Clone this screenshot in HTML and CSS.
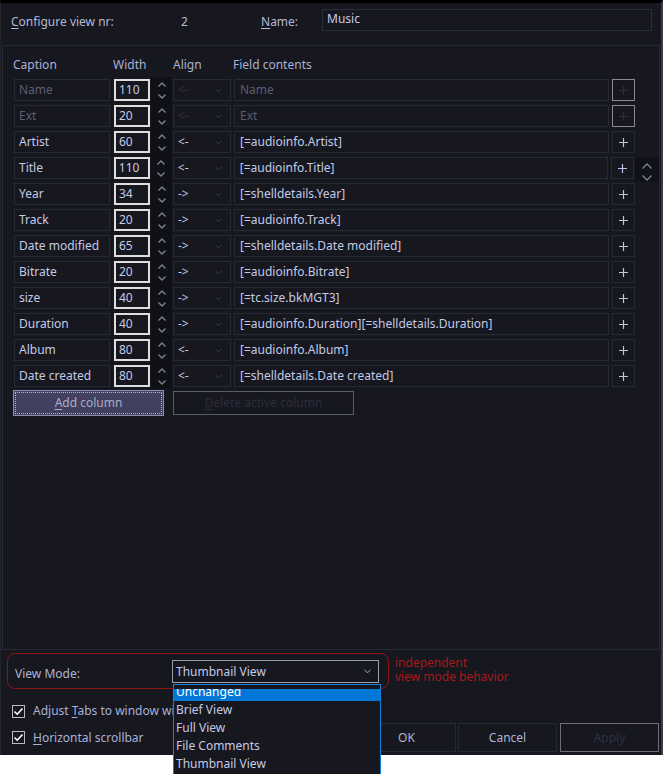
FILE: index.html
```html
<!DOCTYPE html>
<html>
<head>
<meta charset="utf-8">
<link rel="stylesheet" href="styles.css">
</head>
<body>
<div class="window">
  <div class="header">
    <span class="lbl-cfg"><u>C</u>onfigure view nr:</span>
    <span class="nr">2</span>
    <span class="lbl-name"><u>N</u>ame:</span>
    <div class="name-input">Music</div>
  </div>

  <div class="panel">
    <div class="heads">
      <span class="h-cap">Caption</span><span class="h-w">Width</span><span class="h-al">Align</span><span class="h-f">Field contents</span>
    </div>
    <div class="rows">
      <div class="row disabled">
        <div class="cap box">Name</div><div class="wid">110</div>
        <div class="spin"><svg viewBox="0 0 8 5"><path d="M0.5 4.5 L4 1 L7.5 4.5"/></svg><svg viewBox="0 0 8 5"><path d="M0.5 0.5 L4 4 L7.5 0.5"/></svg></div>
        <div class="align box"><span>&lt;-</span><svg class="chev" viewBox="0 0 8 5"><path d="M0.5 0.5 L4 4 L7.5 0.5"/></svg></div>
        <div class="field box">Name</div>
        <div class="plus"><svg viewBox="0 0 9 9"><path d="M4.5 0 V9 M0 4.5 H9"/></svg></div>
      </div>
      <div class="row disabled">
        <div class="cap box">Ext</div><div class="wid">20</div>
        <div class="spin"><svg viewBox="0 0 8 5"><path d="M0.5 4.5 L4 1 L7.5 4.5"/></svg><svg viewBox="0 0 8 5"><path d="M0.5 0.5 L4 4 L7.5 0.5"/></svg></div>
        <div class="align box"><span>&lt;-</span><svg class="chev" viewBox="0 0 8 5"><path d="M0.5 0.5 L4 4 L7.5 0.5"/></svg></div>
        <div class="field box">Ext</div>
        <div class="plus"><svg viewBox="0 0 9 9"><path d="M4.5 0 V9 M0 4.5 H9"/></svg></div>
      </div>
      <div class="row">
        <div class="cap box">Artist</div><div class="wid">60</div>
        <div class="spin"><svg viewBox="0 0 8 5"><path d="M0.5 4.5 L4 1 L7.5 4.5"/></svg><svg viewBox="0 0 8 5"><path d="M0.5 0.5 L4 4 L7.5 0.5"/></svg></div>
        <div class="align box"><span>&lt;-</span><svg class="chev" viewBox="0 0 8 5"><path d="M0.5 0.5 L4 4 L7.5 0.5"/></svg></div>
        <div class="field box">[=audioinfo.Artist]</div>
        <div class="plus"><svg viewBox="0 0 9 9"><path d="M4.5 0 V9 M0 4.5 H9"/></svg></div>
      </div>
      <div class="row">
        <div class="cap box">Title</div><div class="wid">110</div>
        <div class="spin"><svg viewBox="0 0 8 5"><path d="M0.5 4.5 L4 1 L7.5 4.5"/></svg><svg viewBox="0 0 8 5"><path d="M0.5 0.5 L4 4 L7.5 0.5"/></svg></div>
        <div class="align box"><span>&lt;-</span><svg class="chev" viewBox="0 0 8 5"><path d="M0.5 0.5 L4 4 L7.5 0.5"/></svg></div>
        <div class="field box">[=audioinfo.Title]</div>
        <div class="plus"><svg viewBox="0 0 9 9"><path d="M4.5 0 V9 M0 4.5 H9"/></svg></div>
        <div class="scroll"><svg viewBox="0 0 10 6"><path d="M0.5 5.5 L5 1 L9.5 5.5"/></svg><svg viewBox="0 0 10 6"><path d="M0.5 0.5 L5 5 L9.5 0.5"/></svg></div>
      </div>
      <div class="row">
        <div class="cap box">Year</div><div class="wid">34</div>
        <div class="spin"><svg viewBox="0 0 8 5"><path d="M0.5 4.5 L4 1 L7.5 4.5"/></svg><svg viewBox="0 0 8 5"><path d="M0.5 0.5 L4 4 L7.5 0.5"/></svg></div>
        <div class="align box"><span>-&gt;</span><svg class="chev" viewBox="0 0 8 5"><path d="M0.5 0.5 L4 4 L7.5 0.5"/></svg></div>
        <div class="field box">[=shelldetails.Year]</div>
        <div class="plus"><svg viewBox="0 0 9 9"><path d="M4.5 0 V9 M0 4.5 H9"/></svg></div>
      </div>
      <div class="row">
        <div class="cap box">Track</div><div class="wid">20</div>
        <div class="spin"><svg viewBox="0 0 8 5"><path d="M0.5 4.5 L4 1 L7.5 4.5"/></svg><svg viewBox="0 0 8 5"><path d="M0.5 0.5 L4 4 L7.5 0.5"/></svg></div>
        <div class="align box"><span>-&gt;</span><svg class="chev" viewBox="0 0 8 5"><path d="M0.5 0.5 L4 4 L7.5 0.5"/></svg></div>
        <div class="field box">[=audioinfo.Track]</div>
        <div class="plus"><svg viewBox="0 0 9 9"><path d="M4.5 0 V9 M0 4.5 H9"/></svg></div>
      </div>
      <div class="row">
        <div class="cap box">Date modified</div><div class="wid">65</div>
        <div class="spin"><svg viewBox="0 0 8 5"><path d="M0.5 4.5 L4 1 L7.5 4.5"/></svg><svg viewBox="0 0 8 5"><path d="M0.5 0.5 L4 4 L7.5 0.5"/></svg></div>
        <div class="align box"><span>-&gt;</span><svg class="chev" viewBox="0 0 8 5"><path d="M0.5 0.5 L4 4 L7.5 0.5"/></svg></div>
        <div class="field box">[=shelldetails.Date modified]</div>
        <div class="plus"><svg viewBox="0 0 9 9"><path d="M4.5 0 V9 M0 4.5 H9"/></svg></div>
      </div>
      <div class="row">
        <div class="cap box">Bitrate</div><div class="wid">20</div>
        <div class="spin"><svg viewBox="0 0 8 5"><path d="M0.5 4.5 L4 1 L7.5 4.5"/></svg><svg viewBox="0 0 8 5"><path d="M0.5 0.5 L4 4 L7.5 0.5"/></svg></div>
        <div class="align box"><span>-&gt;</span><svg class="chev" viewBox="0 0 8 5"><path d="M0.5 0.5 L4 4 L7.5 0.5"/></svg></div>
        <div class="field box">[=audioinfo.Bitrate]</div>
        <div class="plus"><svg viewBox="0 0 9 9"><path d="M4.5 0 V9 M0 4.5 H9"/></svg></div>
      </div>
      <div class="row">
        <div class="cap box">size</div><div class="wid">40</div>
        <div class="spin"><svg viewBox="0 0 8 5"><path d="M0.5 4.5 L4 1 L7.5 4.5"/></svg><svg viewBox="0 0 8 5"><path d="M0.5 0.5 L4 4 L7.5 0.5"/></svg></div>
        <div class="align box"><span>-&gt;</span><svg class="chev" viewBox="0 0 8 5"><path d="M0.5 0.5 L4 4 L7.5 0.5"/></svg></div>
        <div class="field box">[=tc.size.bkMGT3]</div>
        <div class="plus"><svg viewBox="0 0 9 9"><path d="M4.5 0 V9 M0 4.5 H9"/></svg></div>
      </div>
      <div class="row">
        <div class="cap box">Duration</div><div class="wid">40</div>
        <div class="spin"><svg viewBox="0 0 8 5"><path d="M0.5 4.5 L4 1 L7.5 4.5"/></svg><svg viewBox="0 0 8 5"><path d="M0.5 0.5 L4 4 L7.5 0.5"/></svg></div>
        <div class="align box"><span>-&gt;</span><svg class="chev" viewBox="0 0 8 5"><path d="M0.5 0.5 L4 4 L7.5 0.5"/></svg></div>
        <div class="field box">[=audioinfo.Duration][=shelldetails.Duration]</div>
        <div class="plus"><svg viewBox="0 0 9 9"><path d="M4.5 0 V9 M0 4.5 H9"/></svg></div>
      </div>
      <div class="row">
        <div class="cap box">Album</div><div class="wid">80</div>
        <div class="spin"><svg viewBox="0 0 8 5"><path d="M0.5 4.5 L4 1 L7.5 4.5"/></svg><svg viewBox="0 0 8 5"><path d="M0.5 0.5 L4 4 L7.5 0.5"/></svg></div>
        <div class="align box"><span>&lt;-</span><svg class="chev" viewBox="0 0 8 5"><path d="M0.5 0.5 L4 4 L7.5 0.5"/></svg></div>
        <div class="field box">[=audioinfo.Album]</div>
        <div class="plus"><svg viewBox="0 0 9 9"><path d="M4.5 0 V9 M0 4.5 H9"/></svg></div>
      </div>
      <div class="row">
        <div class="cap box">Date created</div><div class="wid">80</div>
        <div class="spin"><svg viewBox="0 0 8 5"><path d="M0.5 4.5 L4 1 L7.5 4.5"/></svg><svg viewBox="0 0 8 5"><path d="M0.5 0.5 L4 4 L7.5 0.5"/></svg></div>
        <div class="align box"><span>&lt;-</span><svg class="chev" viewBox="0 0 8 5"><path d="M0.5 0.5 L4 4 L7.5 0.5"/></svg></div>
        <div class="field box">[=shelldetails.Date created]</div>
        <div class="plus"><svg viewBox="0 0 9 9"><path d="M4.5 0 V9 M0 4.5 H9"/></svg></div>
      </div>
    </div>
    <div class="col-buttons">
      <div class="btn-add"><span class="focus"><u>A</u>dd column</span></div>
      <div class="btn-del"><u>D</u>elete active column</div>
    </div>
  </div>

  <div class="viewmode-row">
    <div class="viewmode">
      <span class="vm-label">View Mode:</span>
      <div class="select"><span>Thumbnail View</span><svg class="sel-chev" viewBox="0 0 8 5"><path d="M0.5 0.5 L4 4 L7.5 0.5"/></svg></div>
    </div>
    <div class="note"><div>independent</div><div>view mode behavior</div></div>
  </div>

  <div class="bottom">
    <div class="checks">
      <div class="check"><svg viewBox="0 0 13 13"><rect x="0.5" y="0.5" width="12" height="12"/><path d="M2.5 6.5 L5.2 9.2 L10.5 3.5"/></svg><span class="clip">Adjust <u>T</u>abs to window width</span></div>
      <div class="check"><svg viewBox="0 0 13 13"><rect x="0.5" y="0.5" width="12" height="12"/><path d="M2.5 6.5 L5.2 9.2 L10.5 3.5"/></svg><span><u>H</u>orizontal scrollbar</span></div>
    </div>
    <div class="buttons">
      <div class="btn">OK</div>
      <div class="btn">Cancel</div>
      <div class="btn apply">Apply</div>
    </div>
  </div>
</div>

<div class="dropdown">
  <div class="item sel"><span>Unchanged</span></div>
  <div class="item">Brief View</div>
  <div class="item">Full View</div>
  <div class="item">File Comments</div>
  <div class="item">Thumbnail View</div>
</div>
</body>
</html>
```

FILE: styles.css
```css
* { box-sizing: border-box; }
html, body { margin: 0; padding: 0; background: #ffffff; }
body {
  font-family: "Noto Sans", "Open Sans", sans-serif;
  font-size: 12px;
  color: #c4cae6;
  position: relative;
  width: 663px;
  height: 774px;
  overflow: hidden;
}
u { text-decoration: underline; text-underline-offset: 2px; }

.window {
  width: 663px;
  height: 755px;
  background: #16171f;
  border-top: 3px solid #000;
  border-left: 1px solid #23242c;
  border-right: 2px solid #3a3b44;
  display: flex;
  flex-direction: column;
}

/* header */
.header {
  height: 42px;
  display: flex;
  align-items: flex-start;
  padding-top: 6px;
  padding-left: 10px;
  line-height: 22px;
  color: #b3bad8;
}
.lbl-cfg, .nr, .lbl-name { margin-top: 2px; }
.lbl-cfg { width: 170px; }
.nr { width: 80px; }
.lbl-name { width: 61px; }
.name-input {
  width: 330px;
  height: 22px;
  border: 1px solid #2a2c37;
  padding-left: 4px;
  line-height: 18px;
  color: #c4cae6;
}

/* panel */
.panel {
  margin-left: 1px;
  width: 658px;
  height: 605px;
  border: 1px solid #262833;
  padding-top: 11px;
}
.heads {
  display: flex;
  height: 16px;
  line-height: 16px;
  padding-left: 10px;
  color: #a9b1d4;
}
.h-cap { width: 100px; }
.h-w { width: 60px; }
.h-al { width: 60px; }

.rows {
  margin-top: 6px;
  display: flex;
  flex-direction: column;
  gap: 4px;
}
.row {
  display: flex;
  height: 22px;
  padding-left: 11px;
  align-items: flex-start;
}
.box {
  height: 22px;
  border: 1px solid #272934;
  line-height: 20px;
  padding-left: 4px;
  white-space: nowrap;
  overflow: hidden;
}
.cap { width: 96px; margin-right: 4px; }
.wid {
  width: 36px;
  height: 22px;
  border: 2px solid #dedede;
  padding-left: 3px;
  line-height: 18px;
  margin-right: 1px;
  color: #c4cae6;
}
.spin {
  width: 21px;
  height: 26px;
  margin-top: -2px;
  background: #101117;
  margin-right: 1px;
  display: flex;
  flex-direction: column;
  align-items: center;
  padding-top: 5px;
  gap: 7px;
}
.spin svg { width: 8px; height: 5px; display: block; }
.spin path, .scroll path { fill: none; stroke: #7d8193; stroke-width: 1.4; }
.align {
  width: 58px;
  margin-right: 3px;
  display: flex;
  align-items: center;
  justify-content: space-between;
  padding-right: 8px;
}
.chev { width: 7px; height: 5px; display: block; }
.chev path { fill: none; stroke: #393c4b; stroke-width: 1.1; }
.field { width: 375px; margin-right: 3px; padding-left: 5px; }
.plus {
  width: 23px;
  height: 22px;
  border: 1px solid #272934;
  display: flex;
  align-items: center;
  justify-content: center;
}
.plus svg { width: 9px; height: 9px; display: block; }
.plus path { stroke: #bcc3ea; stroke-width: 1.2; fill: none; }

.row.disabled { color: #5b5f71; }
.row.disabled .align span { color: #2f3240; }
.row.disabled .plus { border-color: #8a8a8e; }
.row.disabled .plus path { stroke: #2c2e3a; }

.scroll {
  width: 24px;
  height: 25px;
  margin-left: 1px;
  background: #111218;
  display: flex;
  flex-direction: column;
  align-items: center;
  padding-top: 6px;
  gap: 6px;
  flex-shrink: 0;
}
.scroll svg { width: 10px; height: 6px; display: block; }

.col-buttons {
  display: flex;
  margin-top: 3px;
  padding-left: 10px;
  align-items: flex-start;
}
.btn-add {
  width: 151px;
  height: 26px;
  background: #41405f;
  border: 1px solid #8c8db3;
  padding: 1px;
  color: #a9accb;
}
.btn-add .focus {
  display: block;
  height: 100%;
  border: 1px dotted #b4b6d4;
  text-align: center;
  line-height: 20px;
}
.btn-del {
  margin-left: 9px;
  margin-top: 1px;
  width: 181px;
  height: 24px;
  border: 1px solid #5a5c66;
  color: #2c2e3c;
  text-align: center;
  line-height: 22px;
}

/* view mode */
.viewmode-row {
  display: flex;
  margin-top: 3px;
  padding-left: 6px;
}
.viewmode {
  width: 382px;
  height: 36px;
  border: 1.5px solid #8c1616;
  border-radius: 8px;
  display: flex;
  align-items: flex-start;
  padding-left: 7px;
}
.vm-label {
  width: 157px;
  line-height: 20px;
  margin-top: 10px;
  color: #aeb5d4;
}
.select {
  margin-top: 6px;
  width: 207px;
  height: 23px;
  border: 1px solid #9a9cae;
  display: flex;
  align-items: center;
  justify-content: space-between;
  padding-left: 3px;
  padding-right: 7px;
  color: #c4cae6;
}
.sel-chev { width: 7px; height: 5px; display: block; }
.sel-chev path { fill: none; stroke: #b4b8cc; stroke-width: 1.1; }
.note {
  margin-left: 6px;
  margin-top: 3px;
  color: #a8191b;
  line-height: 14px;
}

/* bottom */
.bottom {
  display: flex;
  margin-top: 15px;
  padding-left: 11px;
}
.checks {
  display: flex;
  flex-direction: column;
  gap: 12px;
}
.check {
  display: flex;
  align-items: center;
  height: 14px;
  color: #a9b1d6;
  white-space: nowrap;
}
.check .clip {
  display: block;
  max-width: 141px;
  overflow: hidden;
  line-height: 16px;
}
.check svg { width: 13px; height: 13px; display: block; margin-right: 8px; flex-shrink: 0; }
.check rect { fill: #16171f; stroke: #b9b9c0; stroke-width: 1; }
.check path { fill: none; stroke: #ffffff; stroke-width: 1.6; }

.buttons {
  margin-left: auto;
  margin-right: 2px;
  display: flex;
  gap: 2px;
  margin-top: 19px;
}
.btn {
  width: 99px;
  height: 29px;
  border: 1px solid #262833;
  text-align: center;
  line-height: 27px;
  color: #aeb5d6;
}
.btn.apply {
  margin-left: 1px;
  border-color: #6d6d72;
  color: #2f3242;
}

/* dropdown overlay */
.dropdown {
  position: absolute;
  left: 173px;
  top: 684px;
  width: 208px;
  height: 100px;
  border: 1px solid #1b7fd8;
  background: #16171f;
  padding-top: 4px;
  color: #c4cae6;
}
.item {
  height: 18px;
  line-height: 18px;
  padding-left: 2px;
}
.item.sel {
  height: 12px;
  overflow: hidden;
  background: #0078d7;
  color: #ffffff;
}
.item.sel span { display: block; margin-top: -6px; }
```
